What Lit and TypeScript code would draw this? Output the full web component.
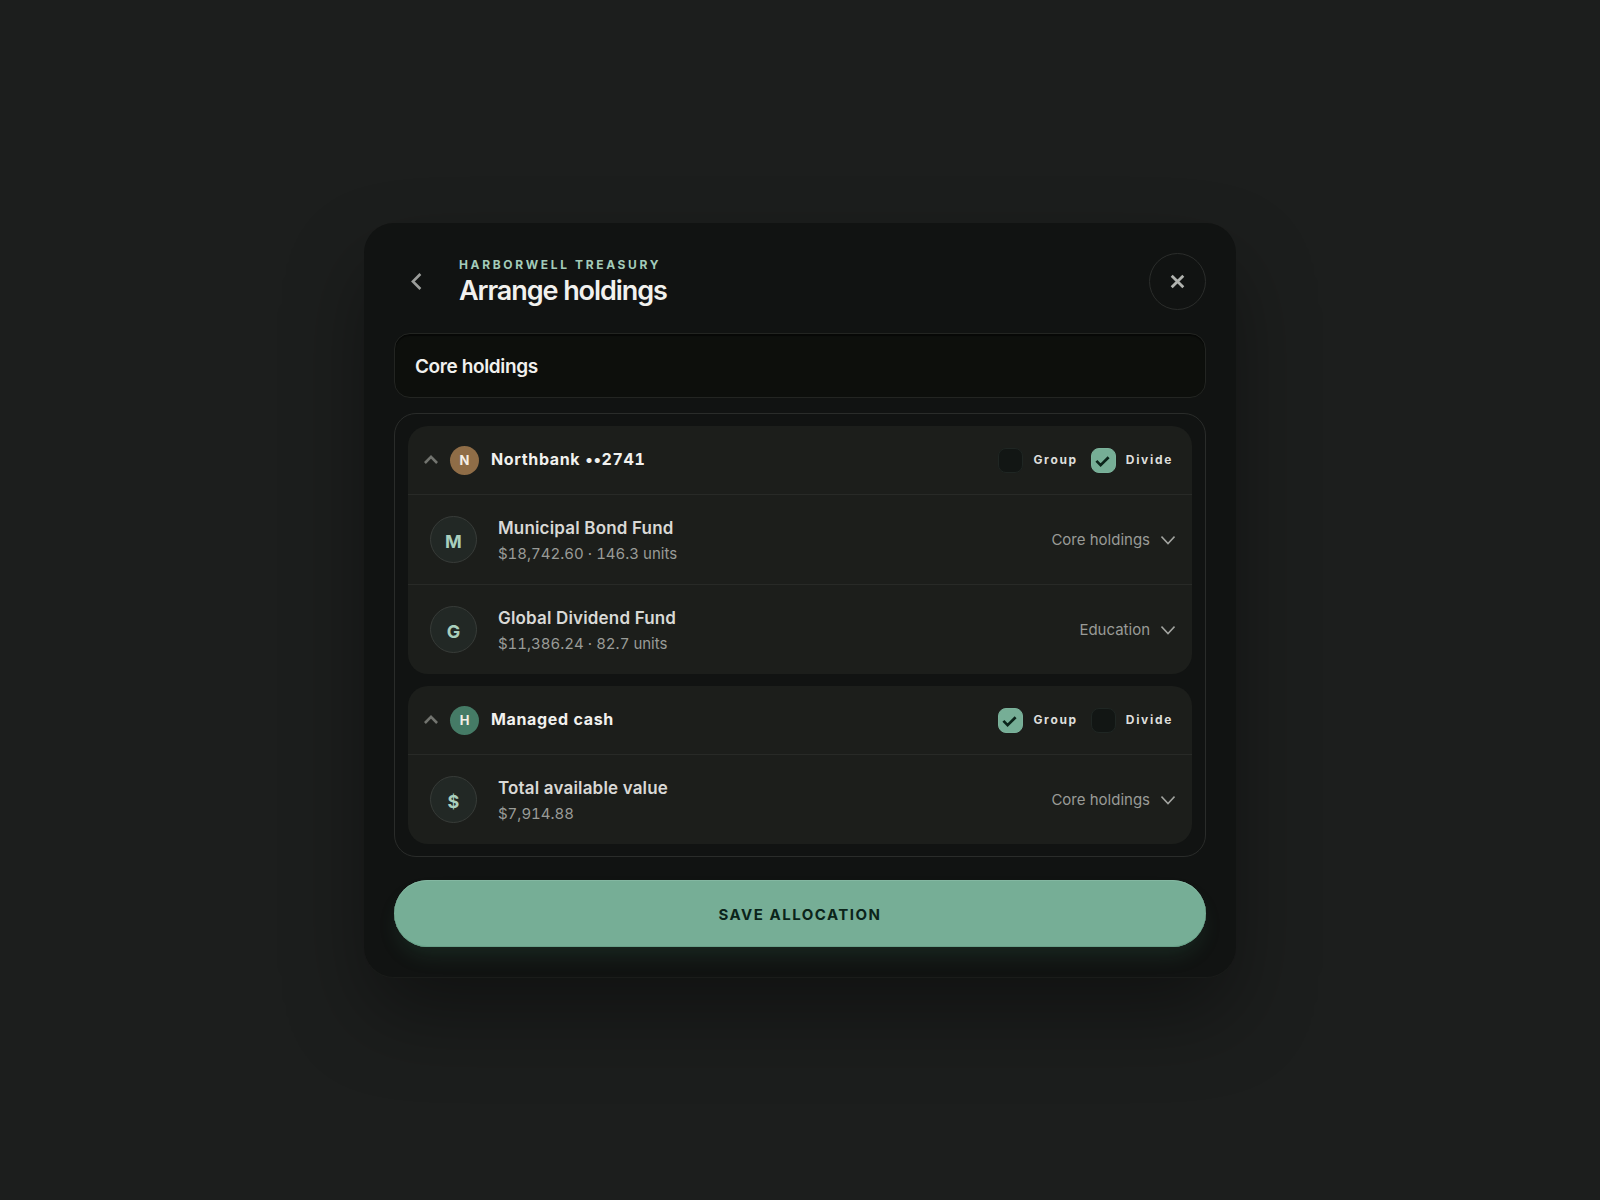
import { LitElement, html, css, svg } from "lit";
import { customElement, property, state } from "lit/decorators.js";
import { classMap } from "lit/directives/class-map.js";

interface Holding {
  id: string;
  mark: string;
  name: string;
  detail: string;
  bucket: string;
}

interface Account {
  id: string;
  initial: string;
  tone: "bronze" | "green";
  name: string;
  mode: "group" | "divide";
  holdings: Holding[];
}

const BUCKETS = ["Core holdings", "Education"];

const ACCOUNTS: Account[] = [
  {
    id: "northbank",
    initial: "N",
    tone: "bronze",
    name: "Northbank ••2741",
    mode: "divide",
    holdings: [
      { id: "muni", mark: "M", name: "Municipal Bond Fund", detail: "$18,742.60 · 146.3 units", bucket: "Core holdings" },
      { id: "global", mark: "G", name: "Global Dividend Fund", detail: "$11,386.24 · 82.7 units", bucket: "Education" },
    ],
  },
  {
    id: "managed",
    initial: "H",
    tone: "green",
    name: "Managed cash",
    mode: "group",
    holdings: [
      { id: "cash", mark: "$", name: "Total available value", detail: "$7,914.88", bucket: "Core holdings" },
    ],
  },
];

@customElement("holding-row")
export class HoldingRow extends LitElement {
  @property({ attribute: false }) holding!: Holding;

  static styles = css`
    :host {
      display: flex;
      align-items: center;
      gap: 21px;
      padding: 19px 17px 19px 22px;
      border-top: 1px solid #282a27;
    }
    .mark {
      box-sizing: border-box;
      flex: none;
      display: grid;
      place-items: center;
      width: 47px;
      height: 47px;
      padding-top: 3px;
      border: 1px solid #383c39;
      border-radius: 50%;
      background: #222825;
      color: #a9cfbd;
      font-size: 18px;
      font-weight: 700;
    }
    .text {
      flex: 1;
      min-width: 0;
      display: grid;
      gap: 3px;
      padding-top: 2px;
    }
    .name {
      font-size: 17px;
      line-height: 24px;
      font-weight: 600;
      letter-spacing: 0.01em;
      color: #d9d9d6;
    }
    .detail {
      font-size: 15px;
      line-height: 22px;
      font-variant-numeric: tabular-nums;
      color: #999b97;
    }
    .pick {
      flex: none;
      display: grid;
      align-items: center;
    }
    .pick > * {
      grid-area: 1 / 1;
    }
    select {
      appearance: none;
      field-sizing: content;
      margin: 0;
      padding: 4px 25px 4px 0;
      border: 0;
      border-radius: 6px;
      background: transparent;
      color: #999b97;
      font: inherit;
      font-size: 15px;
      line-height: 22px;
      text-align-last: right;
      cursor: pointer;
    }
    option {
      background: #1c1e1b;
    }
    .arrow {
      justify-self: end;
      width: 14px;
      height: 10px;
      pointer-events: none;
    }
  `;

  render() {
    const h = this.holding;
    return html`
      <span class="mark" aria-hidden="true">${h.mark}</span>
      <div class="text">
        <span class="name">${h.name}</span>
        <span class="detail">${h.detail}</span>
      </div>
      <div class="pick">
        <select id=${h.id} aria-label=${`Allocation for ${h.name}`}>
          ${BUCKETS.map((b) => html`<option ?selected=${b === h.bucket}>${b}</option>`)}
        </select>
        <svg class="arrow" viewBox="0 0 14 10" fill="none" stroke="#a1a39f" stroke-width="1.5" aria-hidden="true">
          <path d="M.5 1.6 7 8.6 13.5 1.6" />
        </svg>
      </div>
    `;
  }
}

@customElement("account-card")
export class AccountCard extends LitElement {
  @property({ attribute: false }) account!: Account;
  @state() private mode: "group" | "divide" = "group";
  @state() private open = true;

  static styles = css`
    :host {
      display: block;
      border-radius: 20px;
      background: #1c1e1b;
      overflow: hidden;
    }
    .head {
      display: flex;
      align-items: center;
      justify-content: space-between;
      height: 68px;
      padding: 0 19px 0 16px;
    }
    .title {
      display: flex;
      align-items: center;
      gap: 12px;
      margin: 0;
      padding: 0;
      border: 0;
      background: none;
      color: #f1f1ee;
      font: inherit;
      font-size: 16px;
      line-height: 24px;
      font-weight: 700;
      cursor: pointer;
    }
    .label {
      padding-bottom: 2px;
      font-variant-numeric: tabular-nums;
      letter-spacing: 0.04em;
    }
    .fold {
      width: 14px;
      height: 10px;
    }
    .fold.closed {
      transform: rotate(180deg);
    }
    .badge {
      display: grid;
      place-items: center;
      width: 29px;
      height: 29px;
      border-radius: 50%;
      color: #f4efe6;
      font-size: 13px;
    }
    .bronze {
      background: #8f6d47;
    }
    .green {
      background: #457b66;
    }
    .modes {
      display: flex;
      gap: 13px;
    }
    .mode {
      display: flex;
      align-items: center;
      gap: 10px;
      color: #dededb;
      font-size: 12px;
      line-height: 20px;
      font-weight: 700;
      letter-spacing: 0.14em;
      cursor: pointer;
    }
    .box {
      display: grid;
    }
    .box > * {
      grid-area: 1 / 1;
      box-sizing: border-box;
      width: 25px;
      height: 25px;
    }
    input {
      appearance: none;
      margin: 0;
      border: 1px solid #1f2623;
      border-radius: 8px;
      background: #121614;
      cursor: pointer;
    }
    input:checked {
      border-color: #7bb29b;
      background: #76ae96;
    }
    .tick {
      pointer-events: none;
      visibility: hidden;
    }
    input:checked + .tick {
      visibility: visible;
    }
  `;

  willUpdate(changed: Map<string, unknown>) {
    if (changed.has("account")) this.mode = this.account.mode;
  }

  private renderMode(mode: "group" | "divide", label: string) {
    const id = `${this.account.id}-${mode}`;
    return html`
      <label class="mode" for=${id}>
        <span class="box">
          <input
            id=${id}
            type="checkbox"
            .checked=${this.mode === mode}
            @change=${() => {
              this.mode = mode;
              this.requestUpdate();
            }}
          />
          <svg class="tick" viewBox="0 0 25 25" fill="none" stroke="#0b241a" stroke-width="2.7" aria-hidden="true">
            <path d="M5.4 12.9 9.6 17.2 17.6 9.2" />
          </svg>
        </span>
        ${label}
      </label>
    `;
  }

  render() {
    const a = this.account;
    return html`
      <div class="head">
        <button class="title" type="button" aria-expanded=${this.open} @click=${() => (this.open = !this.open)}>
          <svg class=${classMap({ fold: true, closed: !this.open })} viewBox="0 0 14 10" fill="none" stroke="#72746f" stroke-width="2.6" aria-hidden="true">
            <path d="M.9 8 7 1.9 13.1 8" />
          </svg>
          <span class="badge ${a.tone}" aria-hidden="true">${a.initial}</span>
          <span class="label">${a.name}</span>
        </button>
        <div class="modes">${this.renderMode("group", "Group")}${this.renderMode("divide", "Divide")}</div>
      </div>
      ${this.open ? a.holdings.map((h) => html`<holding-row .holding=${h}></holding-row>`) : null}
    `;
  }
}

const backIcon = svg`<path d="M9.4 1 1.9 8.5 9.4 16" />`;
const closeIcon = svg`<path d="M1.7 1.7 13.3 13.3M13.3 1.7 1.7 13.3" />`;

@customElement("app-root")
export class AppRoot extends LitElement {
  static styles = css`
    :host {
      box-sizing: border-box;
      display: grid;
      place-items: center;
      min-height: 100vh;
      padding: 32px;
      background: #1c1e1d;
      color: #f1f1ee;
      font-family: Inter, "Liberation Sans", sans-serif;
    }
    .dialog {
      box-sizing: border-box;
      width: 100%;
      max-width: 872px;
      padding: 30px;
      border-radius: 30px;
      background: #111312;
      box-shadow: 0 1px 0 #1a1c1a, 0 40px 84px -6px rgba(0, 0, 0, 0.42);
    }
    .top {
      display: flex;
      align-items: center;
      gap: 20px;
      margin-bottom: 23px;
    }
    .back,
    .close {
      flex: none;
      display: grid;
      place-items: center;
      margin: 0;
      padding: 0;
      border: 0;
      background: none;
      cursor: pointer;
    }
    .back {
      width: 45px;
      height: 57px;
    }
    .close {
      width: 57px;
      height: 57px;
      border: 1px solid #2b2d2b;
      border-radius: 50%;
    }
    .heading {
      flex: 1;
      min-width: 0;
      display: grid;
      gap: 2px;
    }
    .eyebrow {
      margin: 0;
      font-size: 12px;
      line-height: 16px;
      font-weight: 700;
      letter-spacing: 0.22em;
      text-transform: uppercase;
      color: #a3ccba;
    }
    h1 {
      margin: 0;
      font-size: 27px;
      line-height: 32px;
      font-weight: 600;
      letter-spacing: -0.04em;
    }
    .field {
      box-sizing: border-box;
      display: block;
      width: 100%;
      height: 65px;
      margin: 0 0 15px;
      padding: 2px 20px 0;
      border: 1px solid #232522;
      border-radius: 16px;
      outline: 0;
      background: #0d0f0c;
      box-shadow: inset 0 2px 1px rgba(0, 0, 0, 0.45);
      color: #f1f1ee;
      font: inherit;
      font-size: 19px;
      line-height: 28px;
      font-weight: 600;
      letter-spacing: -0.02em;
    }
    .accounts {
      display: grid;
      gap: 12px;
      margin-bottom: 23px;
      padding: 12px 13px;
      border: 1px solid #2a2c2a;
      border-radius: 22px;
    }
    .save {
      display: block;
      width: 100%;
      height: 67px;
      margin: 0;
      padding: 2px 0 0;
      border: 0;
      border-radius: 34px;
      background: #76ae96;
      box-shadow: inset 0 1px 0 #83b7a1, inset 0 -1px 0 #68a088, 0 12px 22px -6px rgba(60, 140, 100, 0.2);
      color: #0b241a;
      font: inherit;
      font-size: 15px;
      font-weight: 700;
      letter-spacing: 0.1em;
      text-transform: uppercase;
      cursor: pointer;
    }
  `;

  render() {
    return html`
      <main class="dialog">
        <header class="top">
          <button class="back" type="button" aria-label="Back">
            <svg width="11" height="17" viewBox="0 0 11 17" fill="none" stroke="#9b9d9a" stroke-width="2.6" aria-hidden="true">${backIcon}</svg>
          </button>
          <div class="heading">
            <p class="eyebrow">Harborwell Treasury</p>
            <h1>Arrange holdings</h1>
          </div>
          <button class="close" type="button" aria-label="Close">
            <svg width="15" height="15" viewBox="0 0 15 15" fill="none" stroke="#b1b3af" stroke-width="2.8" aria-hidden="true">${closeIcon}</svg>
          </button>
        </header>
        <input class="field" type="text" aria-label="Portfolio name" .value=${"Core holdings"} />
        <section class="accounts">
          ${ACCOUNTS.map((a) => html`<account-card .account=${a}></account-card>`)}
        </section>
        <button class="save" type="button">Save allocation</button>
      </main>
    `;
  }
}
